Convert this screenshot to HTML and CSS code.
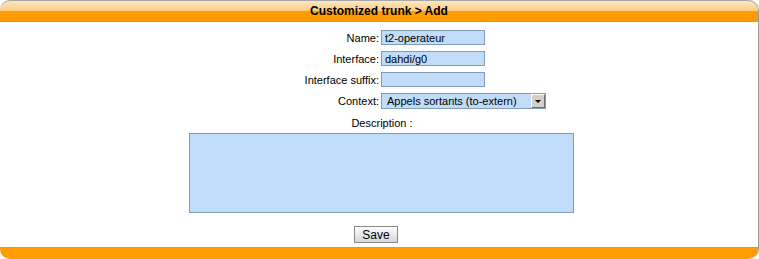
FILE: index.html
```html
<!DOCTYPE html>
<html lang="en">
<head>
  <meta charset="UTF-8">
  <title>Customized trunk &gt; Add</title>
  <link rel="stylesheet" href="styles.css">
</head>
<body>
  <div class="panel">
    <div class="panel-head">Customized trunk &gt; Add</div>
    <form class="panel-body">
      <div class="row">
        <label for="name">Name:</label>
        <input type="text" id="name" value="t2-operateur">
      </div>
      <div class="row">
        <label for="interface">Interface:</label>
        <input type="text" id="interface" value="dahdi/g0">
      </div>
      <div class="row">
        <label for="suffix">Interface suffix:</label>
        <input type="text" id="suffix" value="">
      </div>
      <div class="row">
        <label for="context">Context:</label>
        <span class="select-wrap">
          <select id="context">
            <option>Appels sortants (to-extern)</option>
          </select>
        </span>
      </div>
      <p class="desc-label">Description :</p>
      <textarea class="desc" id="description"></textarea>
      <div class="actions">
        <button type="button" class="btn">Save</button>
      </div>
    </form>
    <div class="panel-foot"></div>
  </div>
</body>
</html>
```

FILE: styles.css
```css
body {
  margin: 0;
  font-family: 'Liberation Sans', Arial, sans-serif;
  font-size: 11px;
  color: #000;
  background: #fff;
}
.panel {
  width: 758px;
  border-right: 1px solid #9c9c9c;
  border-radius: 0 10px 10px 0;
}
.panel-head {
  height: 20px;
  line-height: 21px;
  text-align: center;
  font-weight: bold;
  font-size: 12px;
  border-top: 1px solid #a8a8a8;
  border-bottom: 1px solid #a0a0a0;
  border-radius: 10px 10px 0 0;
  background: linear-gradient(#fde6c0 0%, #fdd596 35%, #fdc878 50%, #ff9c00 52%, #ff9c00 100%);
}
.panel-body {
  padding: 8px 0 4px;
}
.row {
  display: grid;
  grid-template-columns: 379px 1fr;
  column-gap: 2px;
  align-items: center;
  height: 15px;
  margin-bottom: 6px;
}
.row label {
  text-align: right;
}
.row input {
  box-sizing: border-box;
  width: 104px;
  height: 15px;
  margin: 0;
  padding: 0 3px;
  border: 1px solid #7f9db9;
  background: #c0dcf8;
  font-family: inherit;
  font-size: 11px;
}
.select-wrap {
  position: relative;
  display: inline-block;
  width: 165px;
  height: 16px;
}
.select-wrap select {
  box-sizing: border-box;
  width: 165px;
  height: 16px;
  margin: 0;
  padding: 0 0 0 5px;
  border: 1px solid #7f9db9;
  background: #c0dcf8;
  font-family: inherit;
  font-size: 11px;
  appearance: none;
  -webkit-appearance: none;
}
.select-wrap::before {
  content: "";
  position: absolute;
  top: 1px;
  right: 1px;
  width: 14px;
  height: 14px;
  box-sizing: border-box;
  border: 1px solid;
  border-color: #fff #707070 #707070 #fff;
  background: #d4d0c8;
  pointer-events: none;
}
.select-wrap::after {
  content: "";
  position: absolute;
  top: 7px;
  right: 5px;
  width: 0;
  height: 0;
  border-left: 3px solid transparent;
  border-right: 3px solid transparent;
  border-top: 3px solid #000;
  pointer-events: none;
}
.desc-label {
  margin: 9px 0 4px;
  text-align: center;
  padding-left: 6px;
}
.desc {
  display: block;
  box-sizing: border-box;
  width: 385px;
  height: 80px;
  margin: 0 0 0 189px;
  border: 1px solid #7f9db9;
  background: #c0dcf8;
  resize: none;
}
.actions {
  text-align: center;
  margin-top: 13px;
  padding-right: 6px;
}
.btn {
  box-sizing: border-box;
  width: 44px;
  height: 17px;
  padding: 0;
  font-family: inherit;
  font-size: 12px;
  border: 1px solid #8a8a8a;
  background: linear-gradient(#fdfdfd, #e8e8ee 50%, #d6d6de);
}
.panel-foot {
  height: 11px;
  border-top: 1px solid #a0a0a0;
  background: #ff9c00;
  border-radius: 0 0 10px 10px;
}
```
